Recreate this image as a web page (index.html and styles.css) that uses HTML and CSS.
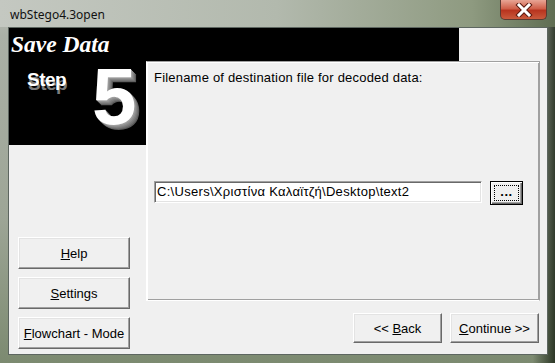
FILE: index.html
```html
<!DOCTYPE html>
<html lang="en">
<head>
    <meta charset="UTF-8">
    <title>wbStego4.3open</title>
    <link rel="stylesheet" href="styles.css">
</head>
<body>
    <div class="window">
        <div class="titlebar">
            <span class="title">wbStego4.3open</span>
            <div class="close-btn">
                <svg width="20" height="14" viewBox="0 0 20 14">
                    <path d="M5 2 L15 12 M15 2 L5 12" stroke="#5a1a10" stroke-width="5" stroke-linecap="square"/>
                    <path d="M5 2 L15 12 M15 2 L5 12" stroke="#fff" stroke-width="3" stroke-linecap="square"/>
                </svg>
            </div>
        </div>

        <div class="client">
            <div class="header">Save Data</div>

            <div class="body">
                <div class="side">
                    <div class="step-box">
                        <span class="step-word">Step</span>
                        <span class="step-num">5</span>
                    </div>
                    <div class="side-buttons">
                        <button class="btn side-btn"><u>H</u>elp</button>
                        <button class="btn side-btn"><u>S</u>ettings</button>
                        <button class="btn side-btn"><u>F</u>lowchart - Mode</button>
                    </div>
                </div>

                <div class="main">
                    <div class="panel">
                        <p class="label">Filename of destination file for decoded data:</p>
                        <div class="file-row">
                            <div class="file-input">C:\Users\Χριστίνα Καλαϊτζή\Desktop\text2</div>
                            <button class="btn browse-btn"><span class="focus">...</span></button>
                        </div>
                    </div>
                    <div class="nav-row">
                        <button class="btn nav-btn">&lt;&lt; <u>B</u>ack</button>
                        <button class="btn nav-btn"><u>C</u>ontinue &gt;&gt;</button>
                    </div>
                </div>
            </div>
        </div>
    </div>
</body>
</html>
```

FILE: styles.css
```css
/* Page */
body {
    margin: 0;
    padding: 0;
    font-family: 'Liberation Sans', Arial, sans-serif;
}

/* Aero window frame */
.window {
    width: 555px;
    height: 363px;
    box-sizing: border-box;
    padding: 0 7px 7px 8px;
    background:
        linear-gradient(90deg, rgba(0,0,0,0) 0%, rgba(0,0,0,0) 96%, rgba(30,40,25,0.85) 100%),
        linear-gradient(180deg, #b9bdb6 0%, #aab0a6 10%, #9da596 60%, #7c8a70 100%);
    overflow: hidden;
}

.titlebar {
    height: 27px;
    display: flex;
    justify-content: space-between;
    align-items: flex-start;
    background: linear-gradient(90deg, #c4c8c1 0%, #b2b9ad 50%, #8e9a80 85%, #5f6d52 100%);
    margin: 0 -7px 0 -8px;
    padding: 0 8px 0 10px;
}

.title {
    font-family: 'Noto Sans', sans-serif;
    font-size: 12px;
    line-height: 12px;
    margin-top: 9px;
    color: #111;
}

.close-btn {
    width: 45px;
    height: 19px;
    border: 1px solid #5b3a32;
    border-top: none;
    border-radius: 0 0 5px 5px;
    background: linear-gradient(180deg, #e8a595 0%, #d0604a 45%, #b8341f 55%, #c95a3c 100%);
    display: flex;
    align-items: center;
    justify-content: center;
}

/* Client area */
.client {
    height: 328px;
    box-sizing: border-box;
    border: 1px solid #5d6660;
    background: #f0f0f0;
    display: flex;
    flex-direction: column;
}

.header {
    width: 450px;
    height: 33px;
    background: #000;
    color: #fff;
    font-family: 'Liberation Serif', 'Times New Roman', serif;
    font-style: italic;
    font-weight: bold;
    font-size: 23.5px;
    line-height: 32px;
    padding-left: 2px;
    box-sizing: border-box;
}

.body {
    display: flex;
}

/* Left column */
.side {
    width: 137px;
}

.step-box {
    height: 84px;
    background: #000;
    position: relative;
}

.step-word {
    position: absolute;
    left: 18px;
    top: 8px;
    color: #fff;
    font-weight: bold;
    font-size: 19px;
    letter-spacing: -0.5px;
    text-shadow: 1px 4px 0 #7c7c7c;
}

.step-num {
    position: absolute;
    left: 83px;
    top: -9px;
    color: #fff;
    font-weight: bold;
    font-size: 80px;
    line-height: 90px;
    text-shadow: 1px 1px 0 #a0a0a0, 2px 2px 0 #909090, 3px 3px 0 #808080, 4px 4px 0 #707070, 5px 5px 0 #5a5a5a;
}

.side-buttons {
    display: flex;
    flex-direction: column;
    gap: 8px;
    margin-top: 92px;
    padding-left: 9px;
}

/* Classic 3D buttons */
.btn {
    font-family: 'Liberation Sans', Arial, sans-serif;
    font-size: 13px;
    color: #000;
    background: #f0f0f0;
    border: 1px solid;
    border-color: #fff #696969 #696969 #fff;
    box-shadow: inset -1px -1px 0 #a0a0a0, inset 1px 1px 0 #e3e3e3;
    padding: 0;
}

.side-btn {
    width: 112px;
    height: 32px;
}

/* Right column */
.main {
    width: 394px;
    display: flex;
    flex-direction: column;
}

.panel {
    height: 240px;
    box-sizing: border-box;
    border: 1px solid;
    border-color: #a0a0a0 #a0a0a0 #fff #fff;
    box-shadow: inset 1px 1px 0 #fff, inset -1px -1px 0 #a0a0a0;
    padding: 8px 0 0 7px;
}

.label {
    margin: 0;
    font-size: 13px;
    line-height: 16px;
    letter-spacing: 0.2px;
    color: #000;
}

.file-row {
    display: flex;
    align-items: flex-start;
    gap: 8px;
    margin-top: 95px;
}

.file-input {
    width: 328px;
    height: 22px;
    box-sizing: border-box;
    background: #fff;
    border: 1px solid;
    border-color: #a0a0a0 #fff #fff #a0a0a0;
    box-shadow: inset 1px 1px 0 #696969, inset -1px -1px 0 #e3e3e3;
    font-size: 13px;
    line-height: 20px;
    letter-spacing: 0.3px;
    padding-left: 2px;
    white-space: nowrap;
    overflow: hidden;
}

.browse-btn {
    width: 33px;
    height: 24px;
    border: 1px solid #000;
    box-shadow: inset 1px 1px 0 #fff, inset -1px -1px 0 #696969, inset -2px -2px 0 #a0a0a0;
    display: flex;
    padding: 3px;
    font-weight: bold;
}

.focus {
    flex: 1;
    border: 1px dotted #000;
    line-height: 12px;
    letter-spacing: 0.5px;
}

.nav-row {
    display: flex;
    justify-content: flex-end;
    gap: 8px;
    margin-top: 12px;
    padding-right: 1px;
}

.nav-btn {
    width: 89px;
    height: 30px;
}
```
